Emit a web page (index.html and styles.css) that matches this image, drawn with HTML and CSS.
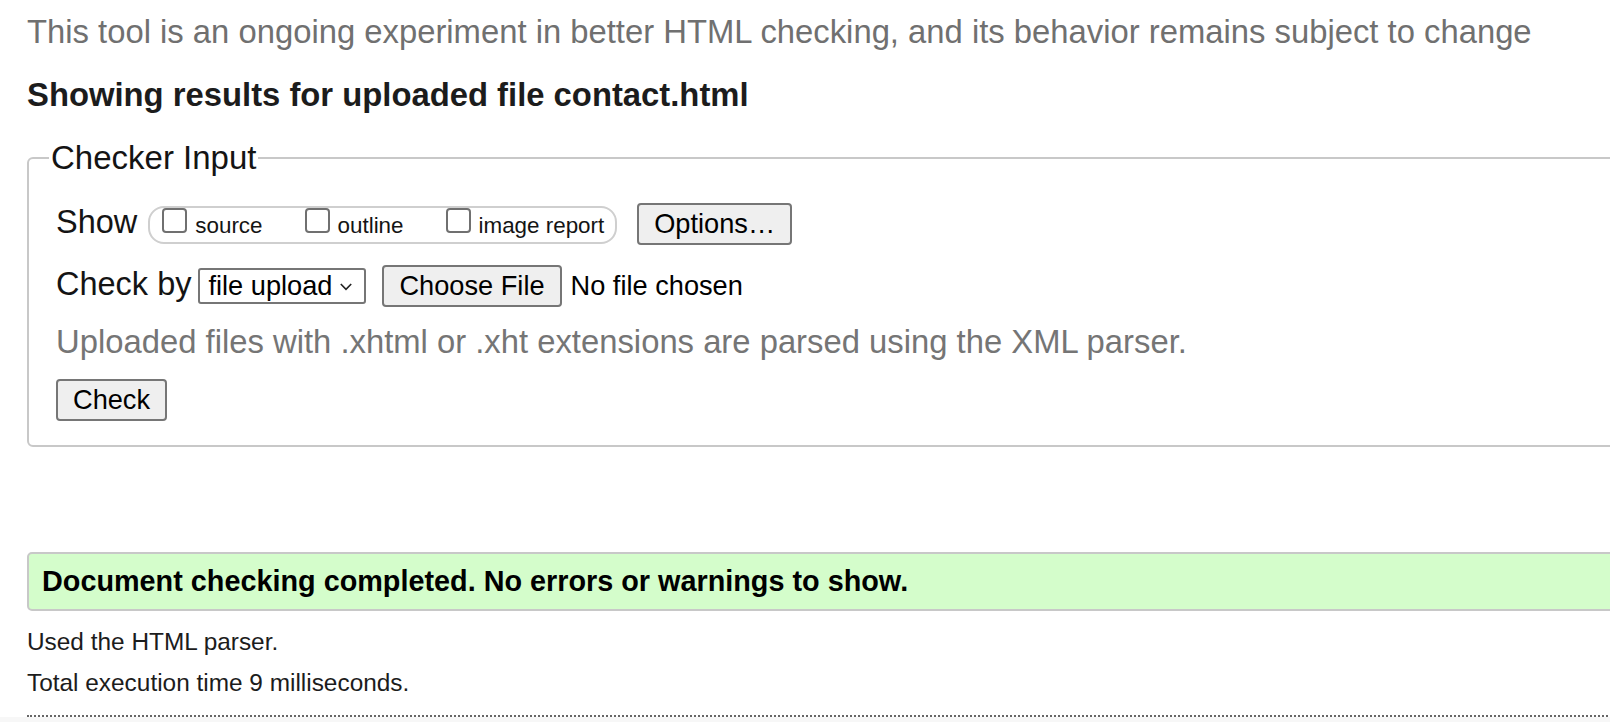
FILE: index.html
```html
<!DOCTYPE html>
<html lang="en">
<head>
<meta charset="utf-8">
<title>Nu Html Checker</title>
<link rel="stylesheet" href="styles.css">
</head>
<body>
<div class="page">
  <p class="intro">This tool is an ongoing experiment in better HTML checking, and its behavior remains subject to change</p>
  <h2 class="heading">Showing results for uploaded file contact.html</h2>
  <fieldset class="input">
    <legend>Checker Input</legend>
    <div class="row row-show">
      <span class="lbl">Show</span>
      <span class="pill">
        <label class="opt"><span class="cb"></span>source</label>
        <label class="opt"><span class="cb"></span>outline</label>
        <label class="opt"><span class="cb"></span>image report</label>
      </span>
      <button class="btn" type="button">Options…</button>
    </div>
    <div class="row row-by">
      <span class="lbl lbl-by">Check by</span>
      <span class="select">file upload<svg class="chev" width="12" height="8" viewBox="0 0 12 8"><polyline points="0.8,1 6,6.4 11.2,1" fill="none" stroke="#222" stroke-width="1.6"/></svg></span>
      <button class="btn btn-file" type="button">Choose File</button>
      <span class="nofile">No file chosen</span>
    </div>
    <p class="note">Uploaded files with .xhtml or .xht extensions are parsed using the XML parser.</p>
    <div class="row row-check">
      <button class="btn" type="button">Check</button>
    </div>
  </fieldset>
  <div class="success">Document checking completed. No errors or warnings to show.</div>
  <p class="meta meta-first">Used the HTML parser.</p>
  <p class="meta">Total execution time 9 milliseconds.</p>
  <div class="dots"></div>
</div>
<div class="footer"></div>
</body>
</html>
```

FILE: styles.css
```css
html {
  overflow: hidden;
}
body {
  margin: 0;
  font-family: "Liberation Sans", Arial, sans-serif;
  color: #222;
  background: #fff;
}
.page {
  width: 1700px;
  padding-left: 27px;
}
.intro {
  margin: 12px 0 0;
  font-size: 32.8px;
  line-height: 40px;
  color: #707070;
  white-space: nowrap;
}
.heading {
  margin: 23px 0 0;
  font-size: 32.8px;
  line-height: 40px;
  font-weight: bold;
  color: #1c1c1c;
}
.input {
  margin: 25px 0 0;
  padding: 27px 0 24px 27px;
  border: 2px solid #c8c8c8;
  border-radius: 6px;
  min-width: 0;
}
.input legend {
  font-size: 33px;
  line-height: 36px;
  padding: 0 2px;
  margin-left: -7px;
  color: #141414;
}
.row {
  display: flex;
  align-items: baseline;
}
.lbl {
  font-size: 32.5px;
  line-height: 38px;
  margin-right: 11px;
  color: #141414;
}
.lbl-by {
  margin-right: 7px;
}
.pill {
  display: flex;
  align-items: baseline;
  box-sizing: border-box;
  height: 38px;
  border: 2px solid #cfcfcf;
  border-radius: 16px;
  padding: 0 11px 0 12px;
  margin-right: 20px;
}
.opt {
  display: block;
  font-size: 22.4px;
  line-height: 30px;
  margin-right: 42px;
  color: #141414;
}
.opt:last-child {
  margin-right: 0;
}
.cb {
  display: inline-block;
  box-sizing: border-box;
  width: 25px;
  height: 25px;
  border: 2px solid #707070;
  border-radius: 4px;
  background: #fff;
  margin-right: 8px;
}
.btn {
  box-sizing: border-box;
  height: 42px;
  font-family: "Liberation Sans", Arial, sans-serif;
  font-size: 27.2px;
  line-height: 38px;
  padding: 0 15px;
  border: 2px solid #767676;
  border-radius: 4px;
  background: #efefef;
  color: #000;
  margin: 0;
}
.row-by {
  margin-top: 20px;
}
.select {
  display: flex;
  align-items: center;
  box-sizing: border-box;
  width: 168px;
  height: 36px;
  border: 2px solid #767676;
  border-radius: 3px;
  padding: 0 0 0 8px;
  font-size: 27.2px;
  line-height: 32px;
  color: #000;
  margin-right: 16px;
}
.chev {
  margin-left: auto;
  margin-right: 12px;
  margin-top: 2px;
}
.btn-file {
  margin-right: 9px;
}
.nofile {
  font-size: 27.2px;
  line-height: 38px;
  color: #000;
}
.note {
  margin: 15px 0 0;
  font-size: 32.8px;
  line-height: 40px;
  color: #757575;
}
.row-check {
  margin-top: 17px;
}
.success {
  margin-top: 105px;
  border: 2px solid #c8c8c8;
  border-radius: 5px;
  background: #d4fdcb;
  padding: 0 13px;
  font-size: 28.8px;
  line-height: 55px;
  font-weight: bold;
  color: #000;
}
.meta {
  margin: 13px 0 0;
  font-size: 24.4px;
  line-height: 28px;
  color: #1c1c1c;
}
.meta-first {
  margin-top: 17px;
}
.dots {
  margin-top: 18px;
  border-top: 2px dotted #666;
}
.footer {
  height: 40px;
  background: #f7f7f7;
}
```
